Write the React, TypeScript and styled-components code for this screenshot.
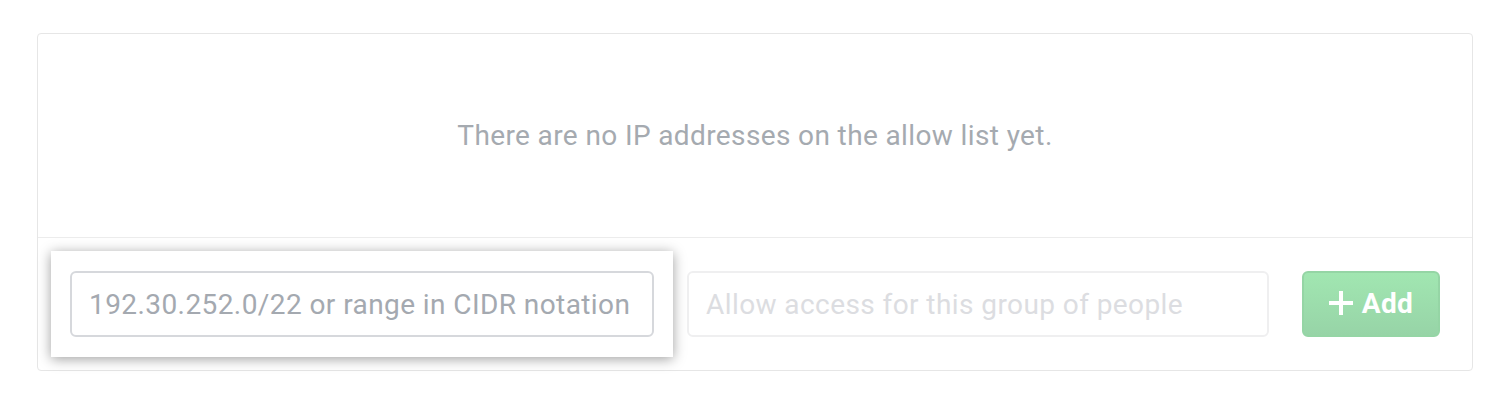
import React from "react";
import styled, { createGlobalStyle } from "styled-components";

const GlobalStyle = createGlobalStyle`
  html, body {
    margin: 0;
    padding: 0;
    background: #fff;
  }
  body {
    font-family: Roboto, "Liberation Sans", sans-serif;
  }
`;

const Page = styled.div`
  padding: 33px 35px 36px 37px;
`;

const Panel = styled.div`
  border: 1px solid #e6e6e6;
  border-radius: 4px;
  background: #fff;
`;

const EmptyState = styled.div`
  height: 203px;
  display: flex;
  align-items: center;
  justify-content: center;
  border-bottom: 1px solid #ececec;
  font-size: 28px;
  color: #a5aab0;
  letter-spacing: 0.38px;
`;

const Form = styled.div`
  display: flex;
  align-items: center;
  gap: 33px;
  padding: 33px 32px;
`;

const Spotlight = styled.div`
  position: relative;
  flex: 0 0 584px;
  display: flex;

  &::before {
    content: "";
    position: absolute;
    inset: -20px -19px;
    background: #fff;
    box-shadow: 0 2px 12px rgba(0, 0, 0, 0.38);
  }
`;

const Field = styled.input<{ $muted?: boolean }>`
  position: relative;
  box-sizing: border-box;
  width: 100%;
  height: 66px;
  padding: 0 17px;
  border: 2px solid ${(p) => (p.$muted ? "#efeff0" : "#d6d8dc")};
  border-radius: 6px;
  background: #fff;
  font-family: Roboto, "Liberation Sans", sans-serif;
  font-size: 28px;
  letter-spacing: 0.42px;
  outline: none;

  &::placeholder {
    color: ${(p) => (p.$muted ? "#dcdde1" : "#a4a9b0")};
  }
`;

const Second = styled.div`
  flex: 0 0 582px;
  display: flex;
`;

const AddButton = styled.button`
  box-sizing: border-box;
  width: 138px;
  height: 66px;
  display: flex;
  align-items: center;
  justify-content: center;
  gap: 9px;
  padding: 0 0 2px;
  border: 2px solid #95d5a5;
  border-radius: 6px;
  background: linear-gradient(#a1e6b1, #97d4a7);
  color: #fff;
  font-family: Roboto, "Liberation Sans", sans-serif;
  font-size: 28px;
  font-weight: 700;
  letter-spacing: 0.4px;
  cursor: pointer;
`;

function PlusIcon() {
  return (
    <svg width="24" height="24" viewBox="0 0 24 24" aria-hidden="true">
      <path d="M12 0v24M0 12h24" stroke="#fff" strokeWidth="4" fill="none" />
    </svg>
  );
}

export default function App() {
  return (
    <>
      <GlobalStyle />
      <Page>
        <Panel>
          <EmptyState>There are no IP addresses on the allow list yet.</EmptyState>
          <Form>
            <Spotlight>
              <Field placeholder="192.30.252.0/22 or range in CIDR notation" />
            </Spotlight>
            <Second>
              <Field $muted placeholder="Allow access for this group of people" />
            </Second>
            <AddButton>
              <PlusIcon />
              Add
            </AddButton>
          </Form>
        </Panel>
      </Page>
    </>
  );
}
